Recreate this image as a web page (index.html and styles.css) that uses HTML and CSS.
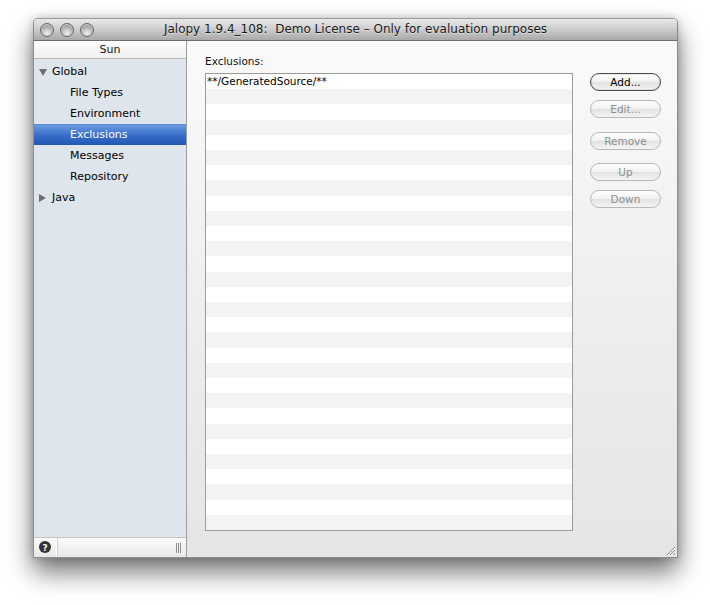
FILE: index.html
```html
<!DOCTYPE html>
<html>
<head>
<meta charset="utf-8">
<link rel="stylesheet" href="styles.css">
</head>
<body>
<div class="page">
  <div class="window">
    <div class="titlebar">
      <div class="lights">
        <span class="light"></span>
        <span class="light"></span>
        <span class="light"></span>
      </div>
      <div class="title">Jalopy 1.9.4_108:&nbsp; Demo License – Only for evaluation purposes</div>
    </div>
    <div class="content">
      <div class="sidebar">
        <div class="sb-head">Sun</div>
        <div class="tree">
          <div class="node"><span class="tri down"></span>Global</div>
          <div class="node child">File Types</div>
          <div class="node child">Environment</div>
          <div class="node child selected">Exclusions</div>
          <div class="node child">Messages</div>
          <div class="node child">Repository</div>
          <div class="node"><span class="tri right"></span>Java</div>
        </div>
        <div class="sb-foot">
          <div class="help">?</div>
          <div class="foot-fill"><span class="grip"></span></div>
        </div>
      </div>
      <div class="main">
        <div class="label">Exclusions:</div>
        <div class="row">
          <div class="list">
            <div class="item">**/GeneratedSource/**</div>
          </div>
          <div class="buttons">
            <div class="btn default">Add...</div>
            <div class="btn disabled b-edit">Edit...</div>
            <div class="btn disabled b-remove">Remove</div>
            <div class="btn disabled b-up">Up</div>
            <div class="btn disabled b-down">Down</div>
          </div>
        </div>
        <div class="resize">
          <svg width="11" height="11" viewBox="0 0 11 11">
            <path d="M10 2 L2 10 M10 5 L5 10 M10 8 L8 10" stroke="#8a8a8a" stroke-width="1" fill="none"/>
            <path d="M10 3 L3 10 M10 6 L6 10 M10 9 L9 10" stroke="#f4f4f4" stroke-width="1" fill="none"/>
          </svg>
        </div>
      </div>
    </div>
  </div>
</div>
</body>
</html>
```

FILE: styles.css
```css
* { box-sizing: border-box; }
html, body { margin: 0; padding: 0; background: #ffffff; }
body {
  font-family: "DejaVu Sans", "Liberation Sans", sans-serif;
  width: 710px;
  height: 605px;
  overflow: hidden;
}
.page {
  padding: 18px 0 0 33px;
}
.window {
  width: 645px;
  height: 540px;
  display: flex;
  flex-direction: column;
  border: 1px solid #8c8c8c;
  border-top-color: #9a9a9a;
  border-radius: 5px 5px 0 0;
  box-shadow: 0 14px 26px rgba(0,0,0,0.55), 0 0 10px rgba(0,0,0,0.2);
  background: #e8e8e8;
}
.titlebar {
  height: 22px;
  flex: none;
  position: relative;
  display: flex;
  align-items: center;
  background: linear-gradient(#e9e9e9, #cfcfcf 45%, #a9a9a9);
  border-bottom: 1px solid #6f6f6f;
  border-radius: 4px 4px 0 0;
}
.lights {
  display: flex;
  gap: 6px;
  padding-left: 6px;
}
.light {
  width: 14px;
  height: 14px;
  border-radius: 50%;
  border: 1px solid #666;
  background: radial-gradient(circle at 50% 78%, #f0f0f0 0, #c4c4c4 40%, #858585 85%);
  box-shadow: inset 0 1px 1px rgba(255,255,255,0.7);
}
.title {
  position: absolute;
  left: 0;
  right: 0;
  top: 3px;
  text-align: center;
  font-size: 12px;
  color: #1a1a1a;
  text-shadow: 0 1px 0 rgba(255,255,255,0.5);
  pointer-events: none;
}
.content {
  flex: 1;
  display: flex;
  min-height: 0;
}
.sidebar {
  width: 153px;
  flex: none;
  display: flex;
  flex-direction: column;
  background: #dfe5ec;
  border-right: 1px solid #9e9e9e;
}
.sb-head {
  height: 18px;
  flex: none;
  font-size: 11px;
  text-align: center;
  line-height: 17px;
  color: #111;
  background: linear-gradient(#ffffff, #efefef);
  border-bottom: 1px solid #b6b6b6;
}
.tree {
  flex: 1;
  padding-top: 2px;
}
.node {
  height: 21px;
  line-height: 21px;
  font-size: 11px;
  color: #000;
  padding-left: 18px;
  position: relative;
}
.node.child {
  padding-left: 36px;
}
.node.selected {
  color: #fff;
  background: linear-gradient(#6b9be0, #3a6fcb 50%, #1f57b3);
  border-top: 1px solid #5a8bd6;
  line-height: 19px;
}
.tri {
  position: absolute;
  left: 5px;
  top: 7px;
  width: 0;
  height: 0;
}
.tri.down {
  border-left: 4px solid transparent;
  border-right: 4px solid transparent;
  border-top: 7px solid #6f6f6f;
  top: 8px;
}
.tri.right {
  border-top: 4px solid transparent;
  border-bottom: 4px solid transparent;
  border-left: 7px solid #6f6f6f;
}
.sb-foot {
  height: 20px;
  flex: none;
  display: flex;
  background: linear-gradient(#fbfbfb, #e8e8e8);
  border-top: 1px solid #c4c4c4;
}
.help {
  width: 23px;
  border-right: 1px solid #ffffff;
  display: flex;
  align-items: center;
  justify-content: center;
  color: #fff;
  font-weight: bold;
  font-size: 9px;
  position: relative;
  z-index: 0;
}
.help::before {
  content: "";
  position: absolute;
  width: 12px;
  height: 12px;
  border-radius: 50%;
  background: #333;
  left: 5px;
  top: 3px;
  z-index: -1;
}
.foot-fill {
  flex: 1;
  display: flex;
  justify-content: flex-end;
  align-items: center;
  padding-right: 5px;
  border-left: 1px solid #d0d0d0;
}
.grip {
  width: 5px;
  height: 10px;
  border-left: 1px solid #8f8f8f;
  border-right: 1px solid #8f8f8f;
  position: relative;
}
.grip::after {
  content: "";
  position: absolute;
  left: 1px;
  top: 0;
  width: 1px;
  height: 10px;
  background: #8f8f8f;
}
.main {
  flex: 1;
  display: flex;
  flex-direction: column;
  padding: 13px 16px 26px 18px;
  background: linear-gradient(#fafafa, #ececec 60%, #e5e5e5);
  position: relative;
}
.label {
  font-size: 10.5px;
  color: #111;
  height: 19px;
  line-height: 14px;
}
.row {
  flex: 1;
  display: flex;
  gap: 17px;
  min-height: 0;
}
.list {
  width: 368px;
  flex: none;
  border: 1px solid #9b9b9b;
  background-color: #ffffff;
  background-image: repeating-linear-gradient(#ffffff 0, #ffffff 15.2px, #f3f3f3 15.2px, #f3f3f3 30.4px);
}
.item {
  height: 15px;
  line-height: 15px;
  font-size: 10.5px;
  color: #000;
  padding-left: 1px;
}
.buttons {
  width: 71px;
  display: flex;
  flex-direction: column;
}
.btn {
  height: 18px;
  border-radius: 9px;
  border: 1px solid #9a9a9a;
  background: linear-gradient(#ffffff, #f1f1f1 50%, #e2e2e2 51%, #f4f4f4);
  font-size: 10.5px;
  text-align: center;
  line-height: 16px;
  color: #000;
}
.btn.default {
  border-color: #4a4a4a;
  box-shadow: inset 0 0 0 1px rgba(0,0,0,0.08);
}
.btn.disabled {
  color: #8e8e8e;
  border-color: #b8b8b8;
}
.b-edit { margin-top: 9px; }
.b-remove { margin-top: 14px; }
.b-up { margin-top: 13px; }
.b-down { margin-top: 9px; }
.resize {
  position: absolute;
  right: 1px;
  bottom: 1px;
  width: 11px;
  height: 11px;
  line-height: 0;
}
```
